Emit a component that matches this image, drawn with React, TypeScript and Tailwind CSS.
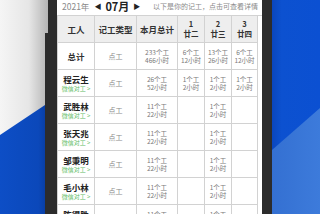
import React from "react";

type Pair = [string, string] | null;

interface Worker {
  name: string;
  total: [string, string];
  days: Pair[];
}

const ONE: Pair = ["1个工", "2小时"];

const WORKERS: Worker[] = [
  { name: "程云生", total: ["26个工", "52小时"], days: [ONE, ONE, ONE] },
  { name: "武胜林", total: ["11个工", "22小时"], days: [null, ONE, null] },
  { name: "张天兆", total: ["11个工", "22小时"], days: [null, ONE, null] },
  { name: "邹秉明", total: ["11个工", "22小时"], days: [null, ONE, null] },
  { name: "毛小林", total: ["11个工", "22小时"], days: [null, ONE, null] },
  { name: "陈得胜", total: ["11个工", "22小时"], days: [null, ONE, null] },
];

const DAYS = [
  ["1", "廿二"],
  ["2", "廿三"],
  ["3", "廿四"],
];

const cell =
  "flex h-[27px] flex-col items-center justify-center border-b border-r border-[#d2d2d2] text-center";

function Small({ pair }: { pair: Pair }) {
  if (!pair) return null;
  return (
    <div className="text-[6.5px] leading-[8.5px] text-[#7a7a7a]">
      <div>{pair[0]}</div>
      <div>{pair[1]}</div>
    </div>
  );
}

export default function App() {
  return (
    <div className="flex h-[214px] w-[320px] overflow-hidden bg-white font-['Noto_Sans_CJK_SC',sans-serif]">
      {/* left backdrop */}
      <div className="relative w-[48px] shrink-0">
        <svg className="absolute inset-0 h-full w-full" viewBox="0 0 48 214" preserveAspectRatio="none">
          <defs>
            <linearGradient id="lgray" x1="0" x2="1" y1="0" y2="0">
              <stop offset="0" stopColor="#f5f5f5" />
              <stop offset="0.6" stopColor="#e6e6e6" />
              <stop offset="1" stopColor="#b5b5b5" />
            </linearGradient>
            <linearGradient id="lblue" x1="0" x2="1" y1="0" y2="0">
              <stop offset="0" stopColor="#0d4ec6" />
              <stop offset="0.8" stopColor="#0b48ba" />
              <stop offset="1" stopColor="#083b9c" />
            </linearGradient>
          </defs>
          <rect width="48" height="214" fill="url(#lgray)" />
          <polygon points="0,135 48,103 48,214 0,214" fill="url(#lblue)" />
        </svg>
        <div className="absolute bottom-0 right-0 top-[33px] w-[3px] bg-[#2c2c2c]" />
      </div>

      {/* phone */}
      <div className="flex shrink-0">
        <div className="w-[9px] bg-[#2c2c2c]" />
        <div className="w-[205px] bg-white">
          <div className="flex h-[15px] items-center justify-between pb-[2px] pl-[5px] pr-[4px]">
            <div className="flex items-center">
              <span className="text-[8.5px] leading-none text-[#8a8a8a]">2021年</span>
              <span className="ml-[5px] text-[7px] leading-none text-[#222]">◀</span>
              <span className="ml-[4px] text-[11px] font-bold leading-none text-[#222]">07月</span>
              <span className="ml-[4px] text-[7px] leading-none text-[#222]">▶</span>
            </div>
            <span className="text-[7px] leading-none text-[#8a8a8a]">以下是你的记工，点击可查看详情</span>
          </div>

          <div className="grid grid-cols-[38px_42px_41px_27px_27px_26px] border-t border-[#d2d2d2]">
            {/* header */}
            <div className={`${cell} border-l bg-[#eeeeee] text-[8.5px] font-bold text-[#333]`}>工人</div>
            <div className={`${cell} bg-[#eeeeee] text-[8.5px] font-bold text-[#333]`}>记工类型</div>
            <div className={`${cell} bg-[#eeeeee] text-[8.5px] font-bold text-[#333]`}>本月总计</div>
            {DAYS.map(([d, l]) => (
              <div key={d} className={`${cell} bg-[#eeeeee] text-[7.5px] font-bold leading-[10px] text-[#333]`}>
                <div>{d}</div>
                <div>{l}</div>
              </div>
            ))}

            {/* totals */}
            <div className={`${cell} border-l text-[8.5px] font-bold text-[#333]`}>总计</div>
            <div className={`${cell} text-[7px] text-[#8a8a8a]`}>点工</div>
            <div className={cell}>
              <Small pair={["233个工", "466小时"]} />
            </div>
            <div className={cell}>
              <Small pair={["6个工", "12小时"]} />
            </div>
            <div className={cell}>
              <Small pair={["13个工", "26小时"]} />
            </div>
            <div className={cell}>
              <Small pair={["6个工", "12小时"]} />
            </div>

            {WORKERS.map((w) => (
              <React.Fragment key={w.name}>
                <div className={`${cell} border-l`}>
                  <div className="text-[8.5px] font-bold leading-[10px] text-[#222]">{w.name}</div>
                  <div className="mt-[1px] text-[6px] leading-[7px] text-[#62bb66]">微信对工 &gt;</div>
                </div>
                <div className={`${cell} text-[7px] text-[#8a8a8a]`}>点工</div>
                <div className={cell}>
                  <Small pair={w.total} />
                </div>
                {w.days.map((p, i) => (
                  <div key={i} className={cell}>
                    <Small pair={p} />
                  </div>
                ))}
              </React.Fragment>
            ))}
          </div>
        </div>
        <div className="w-[10px] bg-[#2c2c2c]" />
      </div>

      {/* right backdrop */}
      <div className="relative flex-1">
        <svg className="absolute inset-0 h-full w-full" viewBox="0 0 48 214" preserveAspectRatio="none">
          <defs>
            <linearGradient id="rblue" x1="0" x2="1" y1="0" y2="0">
              <stop offset="0" stopColor="#0a46bd" />
              <stop offset="0.2" stopColor="#0c51d0" />
              <stop offset="1" stopColor="#0b50d2" />
            </linearGradient>
            <linearGradient id="rlight" x1="0" x2="1" y1="0" y2="0">
              <stop offset="0" stopColor="#3470d2" />
              <stop offset="1" stopColor="#3d7bdb" />
            </linearGradient>
          </defs>
          <rect width="48" height="214" fill="url(#rblue)" />
          <polygon points="0,150 48,108 48,214 0,214" fill="url(#rlight)" />
        </svg>
      </div>
    </div>
  );
}
